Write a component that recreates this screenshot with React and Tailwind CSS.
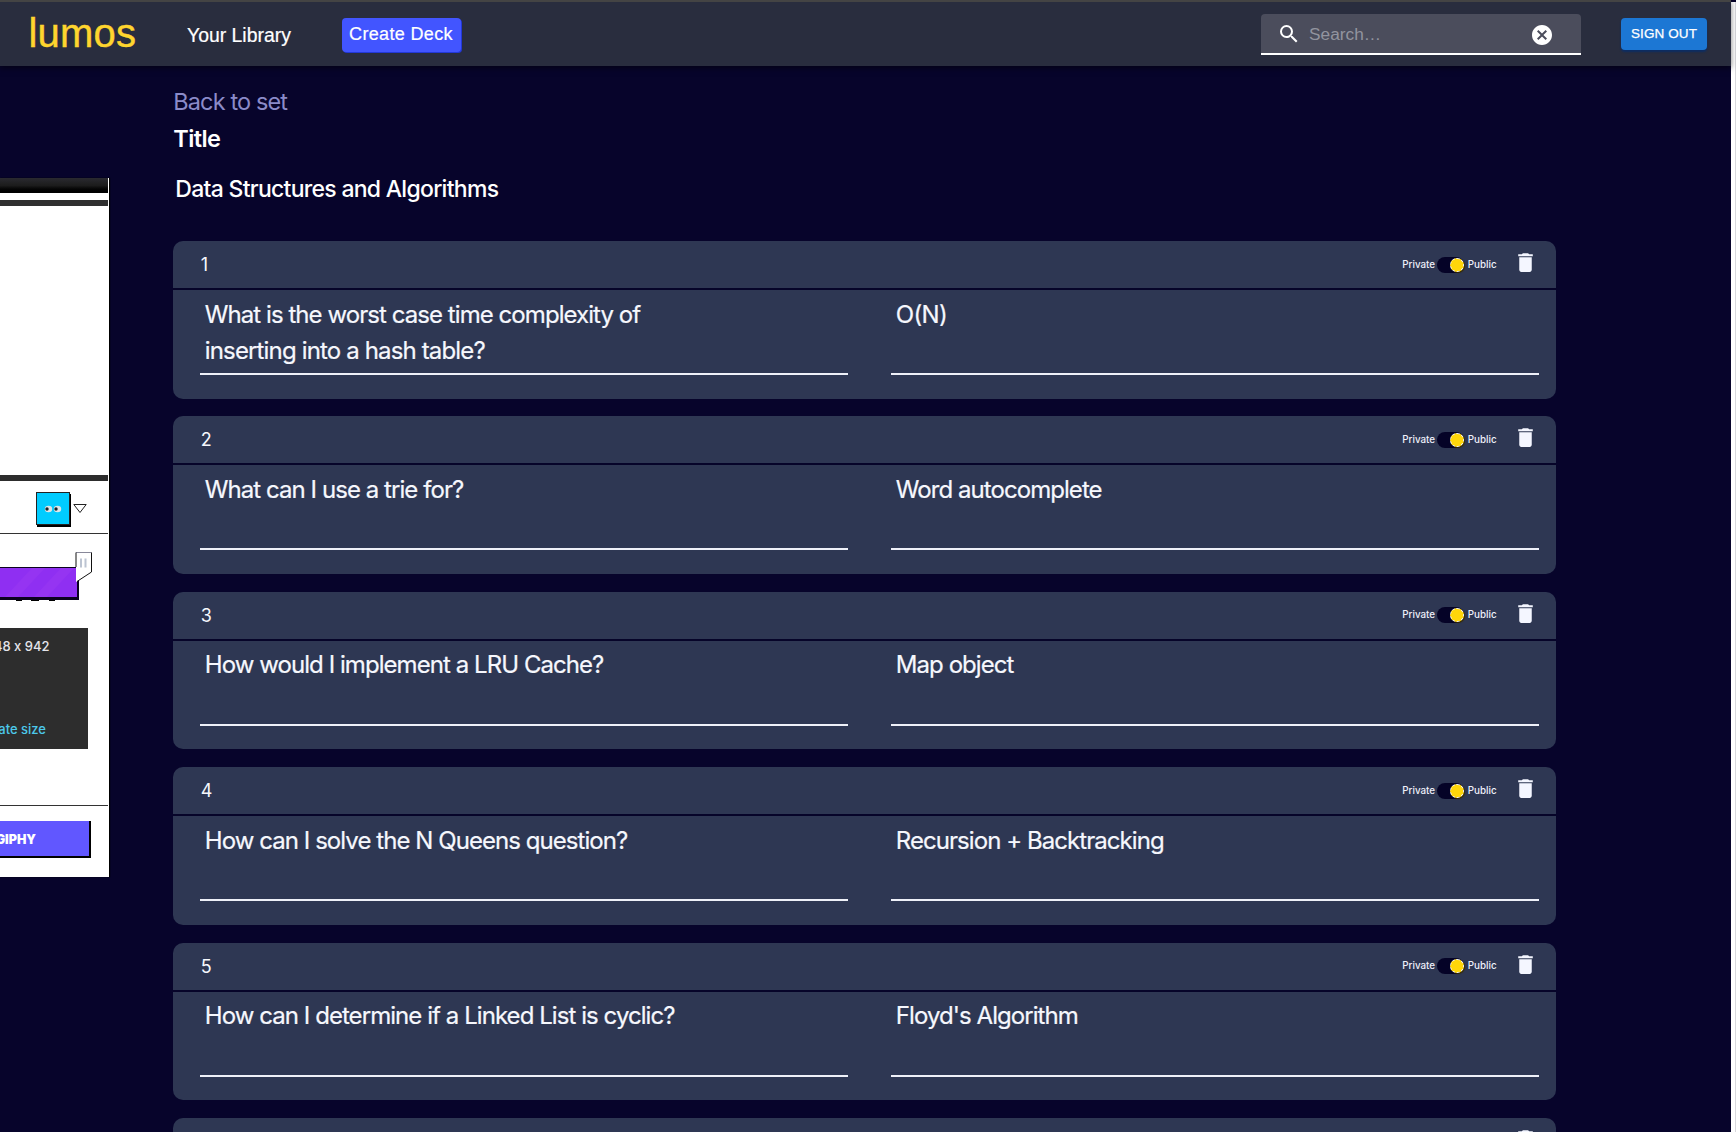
import React from "react";
import { MdCancel, MdDelete, MdSearch } from "react-icons/md";

const cards = [
  { q: ["What is the worst case time complexity of", "inserting into a hash table?"], a: "O(N)" },
  { q: ["What can I use a trie for?"], a: "Word autocomplete" },
  { q: ["How would I implement a LRU Cache?"], a: "Map object" },
  { q: ["How can I solve the N Queens question?"], a: "Recursion + Backtracking" },
  { q: ["How can I determine if a Linked List is cyclic?"], a: "Floyd's Algorithm" },
];

function Header() {
  return (
    <header className="relative z-10 flex h-[66px] w-full shrink-0 items-start border-t-2 border-[#444444] bg-[#292d3e] font-['Liberation_Sans',sans-serif] shadow-[0_2px_6px_rgba(0,0,0,0.5)]">
      <div className="ml-[28.5px] mt-[7px] w-[158.5px] text-[40px] leading-[48px] tracking-[0.2px] text-[#ffd52e] [-webkit-text-stroke:0.4px_#ffd52e]">lumos</div>
      <div className="mt-[20px] w-[154.500px] whitespace-nowrap text-[19.4px] leading-[26px] text-white [-webkit-text-stroke:0.2px_white]">Your Library</div>
      <button className="mt-[16px] h-[34px] w-[119px] whitespace-nowrap rounded-[4px] bg-[#4255ff] pb-px text-[18px] tracking-[0.35px] text-white shadow-[1px_1px_0_#2338d8] [-webkit-text-stroke:0.2px_white]">
        Create Deck
      </button>
      <div className="ml-auto mt-[12px] flex h-[41px] w-[320px] items-center rounded-t-[4px] border-b-2 border-white bg-[#4b4d5c]">
        <MdSearch className="ml-[16px] size-6 text-white" />
        <span className="ml-[8px] mt-[2px] text-[17.3px] text-[#92949f]">Search…</span>
        <MdCancel className="ml-auto mr-[27px] mt-[3px] size-6 text-white" />
      </div>
      <button className="ml-[40px] mr-[24px] mt-[16px] h-[32px] w-[86px] whitespace-nowrap rounded-[4px] bg-[#1c77d4] text-[13.5px] tracking-[0.1px] text-white shadow-[0_2px_2px_#0c2d63] [-webkit-text-stroke:0.25px_white]">
        SIGN OUT
      </button>
    </header>
  );
}

function Toggle() {
  return (
    <div className="flex items-center text-[9.8px] font-medium leading-none text-[#eef0fa]">
      <span className="w-[35px]">Private</span>
      <div className="mr-[4px] flex h-4 w-[26.500px] items-center justify-end rounded-full bg-[#050327]">
        <div className="size-[14px] rounded-full border border-dashed border-white bg-[#ffd60a] shadow-[1px_1px_1px_#3a2c00]" />
      </div>
      <span className="w-[50.5px]">Public</span>
    </div>
  );
}

function Field({ lines, className }) {
  return (
    <div className={"h-[85px] w-[648px] border-b-2 border-[#eef0f8] pl-[4.5px] pt-[6.5px] text-[24px] leading-[36.5px] " + className}>
      {lines.map((l, i) => (
        <div
          key={l}
          className={
            "whitespace-nowrap [-webkit-text-stroke:0.2px_#f6f7fd] " +
            (l.length < 5 ? "tracking-[-0.65px]" : i === 1 ? "tracking-[-0.85px]" : "tracking-[-0.94px]")
          }
        >
          {l}
        </div>
      ))}
    </div>
  );
}

function Card({ n, q, a }) {
  return (
    <section className="h-[157.6px] w-[1383px] shrink-0 overflow-hidden rounded-[10px] bg-[#2e3753] text-[#f6f7fd]">
      <div className="flex h-[49px] items-center border-b-2 border-[#060429] pl-[27.5px]">
        <span className="text-[18px]">{n}</span>
        <div className="ml-auto flex items-center">
          <Toggle />
          <MdDelete className="mb-[4px] mr-[18px] size-[25px] -ml-[5px] text-[#f4f6ff]" />
        </div>
      </div>
      <div className="flex">
        <Field lines={q} className="ml-[27px]" />
        <Field lines={[a]} className="ml-[43px]" />
      </div>
    </section>
  );
}

function NextCard() {
  return (
    <section className="flex h-[157.6px] w-[1383px] shrink-0 justify-end rounded-[10px] bg-[#2e3753]">
      <MdDelete className="mr-[18px] mt-[9.500px] size-[25px] text-[#f4f6ff]" />
    </section>
  );
}

function SideWindow() {
  return (
    <aside className="absolute left-0 top-[178px] flex h-[699px] w-[109px] flex-col overflow-hidden bg-white shadow-[1px_0_1px_#000]">
      <div className="h-[15px] w-[108px] shrink-0 bg-linear-to-b from-[#2a2a30] via-[#1c1c1c] to-black" />
      <div className="mt-[7px] h-[6px] w-[108px] shrink-0 bg-[#303030]" />
      <div className="mt-[269px] h-[6px] w-[108px] shrink-0 bg-[#2d2d2d]" />
      <div className="flex h-[53px] w-[108px] shrink-0 items-start border-b border-[#333]">
        <div className="ml-[36px] mt-[11px] flex h-[33px] w-[34px] items-center justify-center border border-[#222] bg-[#00ccff] shadow-[1px_2px_0_#000]">
          <svg viewBox="0 0 18 8" className="h-[8px] w-[18px]">
            <ellipse cx="4.5" cy="4" rx="3.7" ry="3.3" fill="#dfe6e8" />
            <ellipse cx="13.5" cy="4" rx="3.7" ry="3.3" fill="#dfe6e8" />
            <circle cx="3" cy="4" r="1.7" fill="#16262e" />
            <circle cx="12" cy="4" r="1.7" fill="#16262e" />
          </svg>
        </div>
        <svg viewBox="0 0 14 9" className="ml-[3px] mt-[23px] h-[9px] w-[14px]" fill="none" stroke="#222">
          <path d="M.8.5h12.4L7 8.5z" />
        </svg>
      </div>
      <svg viewBox="0 0 109 50" className="mt-[18px] h-[50px] w-[109px] shrink-0">
        <path d="M0 15h79v33H0z" fill="#0b0220" />
        <path d="M0 16h77v29H0z" fill="#8f2ff2" />
        <path d="M5 45L32 16h13L18 45zM34 45L61 16h13L47 45z" fill="#9534f2" />
        <path d="M76 .5h15.500V20L76 30z" fill="#fff" />
        <path d="M76 .5h15.500" fill="none" stroke="#889" />
        <path d="M76 15V.5M91.500 .5V20L77 29.500" fill="none" stroke="#111" />
        <path d="M81 6.500v9M85.500 6.500v9" stroke="#bcc4d2" strokeWidth="2" />
        <path d="M16 48.500h6M31 48.500h8M49 48.500h6" stroke="#000" />
      </svg>
      <div className="mt-[26px] flex h-[121px] w-[88px] shrink-0 flex-col justify-between bg-[#2d2d2d] pb-[12px] pt-[10px] font-['Inter',sans-serif] text-[13px] font-medium leading-[16px] [font-feature-settings:'calt'_0]">
        <div className="flex w-[49.500px] justify-end whitespace-nowrap text-[#e4e4ea]">48 x 942</div>
        <div className="flex w-[46px] justify-end whitespace-nowrap text-[#4cc8ea]">ate size</div>
      </div>
      <div className="mt-[56px] h-px w-[108px] shrink-0 bg-[#333]" />
      <div className="mt-[15px] flex h-[37px] w-[91px] shrink-0 items-center border-b-2 border-r-2 border-black bg-[#6157ff] pt-[3px]">
        <div className="flex w-[36px] justify-end whitespace-nowrap font-['Inter',sans-serif] text-[12.500px] font-black text-white">GIPHY</div>
      </div>
    </aside>
  );
}

export default function App() {
  return (
    <div className="relative flex h-[1132px] w-[1736px] overflow-hidden bg-[#07042b] font-['Inter',sans-serif]">
      <div className="flex w-[1731px] shrink-0 flex-col">
        <Header />
        <main className="ml-[173.300px] flex flex-col">
          <a className="mt-[18px] h-[37px] text-[23.500px] leading-[36px] tracking-[-0.88px] text-[#8b8bc9]">Back to set</a>
          <h1 className="h-[36px] text-[23.500px] font-semibold leading-[36px] tracking-[-0.6px] text-white">Title</h1>
          <div className="mt-[14px] h-[36px] pl-[2px] text-[23px] font-medium leading-[36px] tracking-[-0.72px] text-white">
            Data Structures and Algorithms
          </div>
          <div className="mt-[34px] flex flex-col gap-[17.800px]">
            {cards.map((c, i) => (
              <Card key={i} n={i + 1} q={c.q} a={c.a} />
            ))}
            <NextCard />
          </div>
        </main>
      </div>
      <div className="mt-[2px] h-full w-[5px] border-r border-[#d8d8dc] bg-white" />
      <SideWindow />
    </div>
  );
}
